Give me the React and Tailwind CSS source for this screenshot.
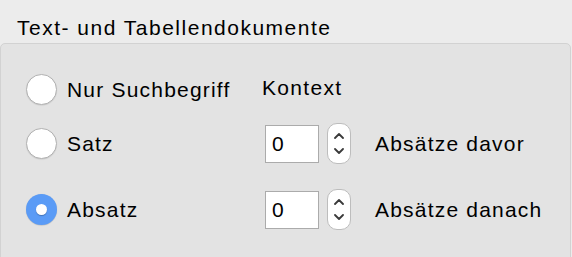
import React from "react"

const FONT = { fontFamily: '"Liberation Sans", Arial, sans-serif' }

function Radio({ checked }) {
  if (checked) {
    return (
      <div className="w-[31px] h-[31px] rounded-full bg-[#5a9bf6] flex items-center justify-center shrink-0 shadow-[0_0.5px_1px_rgba(0,0,0,0.2)]">
        <div className="w-[11px] h-[11px] rounded-full bg-white shadow-[0_1px_1px_rgba(0,0,0,0.25)]" />
      </div>
    )
  }
  return (
    <div className="w-[31px] h-[31px] rounded-full bg-white border border-[#b2b2b2] shrink-0 shadow-[0_0.5px_1px_rgba(0,0,0,0.12)]" />
  )
}

function Stepper() {
  return (
    <div className="w-[24px] h-[41px] rounded-[10px] bg-white border border-[#bdbdbd] flex flex-col items-center justify-center gap-[9px] shrink-0">
      <svg width="10" height="6" viewBox="0 0 10 6">
        <path d="M1 5 L5 1 L9 5" fill="none" stroke="#3a3a3a" strokeWidth="1.8" strokeLinecap="round" strokeLinejoin="round" />
      </svg>
      <svg width="10" height="6" viewBox="0 0 10 6">
        <path d="M1 1 L5 5 L9 1" fill="none" stroke="#3a3a3a" strokeWidth="1.8" strokeLinecap="round" strokeLinejoin="round" />
      </svg>
    </div>
  )
}

function NumberField() {
  return (
    <div className="flex items-center ml-[3px]">
      <div className="w-[54px] h-[38px] bg-white border border-[#ababab] flex items-center pl-[6px] text-[21px] tracking-[1.2px] text-black">
        0
      </div>
      <div className="ml-[8px]">
        <Stepper />
      </div>
    </div>
  )
}

function Row({ checked, label, children, className }) {
  return (
    <div className={`flex items-center ${className}`}>
      <div className="w-[236px] flex items-center gap-[10px]">
        <Radio checked={checked} />
        <span className="text-[21px] tracking-[1.2px] text-black leading-[24px]">{label}</span>
      </div>
      {children}
    </div>
  )
}

export default function App() {
  return (
    <div className="w-[572px] h-[257px] bg-[#ececec] overflow-hidden flex flex-col" style={FONT}>
      <div className="h-[43px] pl-[17px] pt-[16px] text-[21px] leading-[24px] tracking-[1.5px] text-black shrink-0">
        Text- und Tabellendokumente
      </div>

      <div className="w-[571px] h-[230px] shrink-0 rounded-[5px] border border-[#d2d2d2] bg-[#e3e3e3] pl-[25px] pt-[30px]">
        <Row checked={false} label="Nur Suchbegriff" className="h-[31px]">
          <span className="text-[21px] tracking-[1.3px] text-black leading-[24px] -mt-[4px]">Kontext</span>
        </Row>

        <Row checked={false} label="Satz" className="h-[41px] mt-[18px]">
          <NumberField />
          <span className="ml-[24px] text-[21px] tracking-[1.2px] text-black leading-[24px]">Absätze davor</span>
        </Row>

        <Row checked label="Absatz" className="h-[41px] mt-[25px]">
          <NumberField />
          <span className="ml-[24px] text-[21px] tracking-[1.2px] text-black leading-[24px]">Absätze danach</span>
        </Row>
      </div>
    </div>
  )
}
